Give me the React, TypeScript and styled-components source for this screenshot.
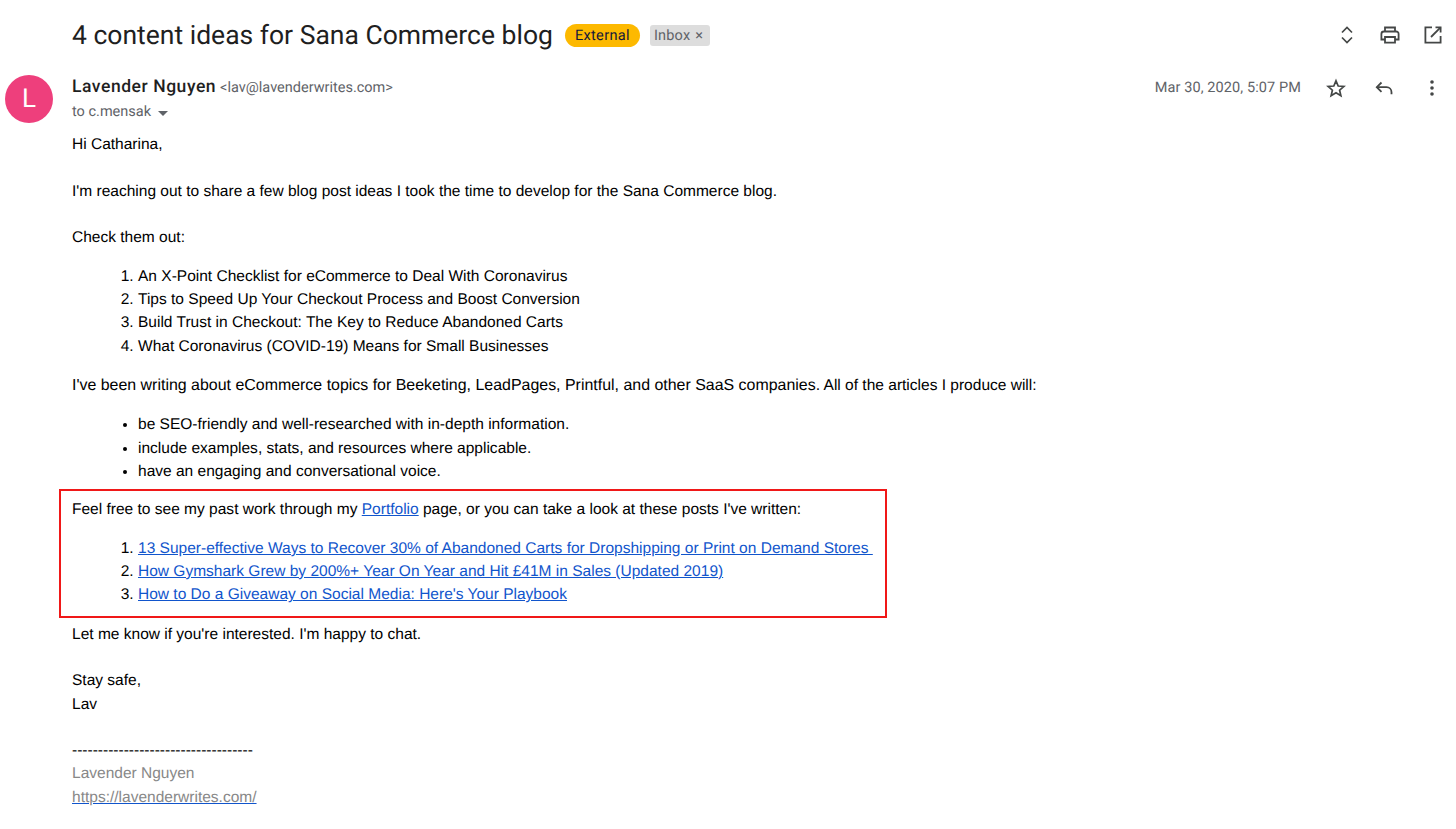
import React from 'react'
import styled, { createGlobalStyle } from 'styled-components'

const GlobalStyle = createGlobalStyle`
  html, body {
    margin: 0;
    padding: 0;
    background: #fff;
    overflow: hidden;
  }
`

const Page = styled.div`
  width: 1456px;
  height: 829px;
  overflow: hidden;
  box-sizing: border-box;
  padding: 15px 0 0 5px;
  font-family: 'Liberation Sans', Arial, sans-serif;
  color: #000;
  text-rendering: geometricPrecision;
`

const SubjectRow = styled.div`
  display: flex;
  align-items: center;
  height: 40px;
  padding-left: 67px;
  padding-right: 11px;
`

const Subject = styled.h1`
  margin: 0;
  padding-top: 1px;
  font: 400 26.5px/40px Roboto, sans-serif;
  color: #1f1f1f;
`

const ExternalTag = styled.span`
  margin-left: 12px;
  height: 23px;
  width: 75px;
  display: flex;
  align-items: center;
  justify-content: center;
  border-radius: 12px;
  background: #fdb900;
  font: 400 14.5px Roboto, sans-serif;
  letter-spacing: 0.35px;
  color: #14183a;
`

const InboxTag = styled.span`
  margin-left: 10px;
  height: 21px;
  width: 60px;
  box-sizing: border-box;
  padding-left: 4px;
  display: flex;
  align-items: center;
  gap: 5px;
  border-radius: 3px;
  background: #dddddd;
  font: 400 14.5px Roboto, sans-serif;
  letter-spacing: 0.2px;
  color: #5f6368;
`

const SubjectActions = styled.div`
  margin-left: auto;
  display: flex;
  align-items: center;
  gap: 19px;
`

const IconSlot = styled.span`
  display: flex;
  width: 24px;
  height: 24px;
  align-items: center;
  justify-content: center;
  color: #444746;
`

const SenderRow = styled.div`
  display: flex;
  margin-top: 6px;
`

const Avatar = styled.div`
  width: 48px;
  height: 48px;
  flex: none;
  margin-top: 14px;
  border-radius: 50%;
  background: #ee3f7c;
  color: #fff;
  display: flex;
  align-items: center;
  justify-content: center;
  font: 400 26px Roboto, sans-serif;
`

const SenderInfo = styled.div`
  margin-left: 19px;
  padding-top: 14px;
  flex: 1;
`

const SenderLine = styled.div`
  display: flex;
  align-items: baseline;
  height: 25px;
  gap: 4px;
`

const SenderName = styled.span`
  font: 500 17.5px/24px Roboto, sans-serif;
  letter-spacing: 0.55px;
  color: #1f1f1f;
`

const SenderEmail = styled.span`
  font: 400 14.5px/24px Roboto, sans-serif;
  color: #5f6368;
`

const ToLine = styled.div`
  display: flex;
  align-items: center;
  gap: 7px;
  height: 24px;
  font: 400 14.5px/24px Roboto, sans-serif;
  color: #5f6368;
`

const Caret = styled.span`
  width: 0;
  height: 0;
  border-left: 5px solid transparent;
  border-right: 5px solid transparent;
  border-top: 5px solid #5f6368;
  margin-top: 2px;
`

const MetaBlock = styled.div`
  display: flex;
  align-items: center;
  height: 24px;
  padding: 15px 12px 0 0;
`

const DateText = styled.span`
  font: 400 14.5px/24px Roboto, sans-serif;
  letter-spacing: 0.1px;
  color: #5f6368;
  margin-right: 23px;
`

const MetaIcons = styled.div`
  display: flex;
  gap: 24px;
`

const Body = styled.div`
  margin-top: 9px;
  padding-left: 67px;
  font-size: 15.52px;
  line-height: 23.33px;
`

const Para = styled.p<{ $gap?: number }>`
  margin: 0 0 ${(p) => p.$gap ?? 23.33}px;
`

const PastedText = styled.span`
  font-size: 15.95px;
`

const OrderedList = styled.ol`
  margin: 0 0 16px;
  padding-left: 66px;
`

const BulletList = styled.ul`
  margin: 0 0 6px;
  padding-left: 66px;
`

const LinkList = styled(OrderedList)`
  margin: 0;
`

const Highlight = styled.div`
  box-sizing: border-box;
  width: 828px;
  height: 129px;
  margin: 0 0 5px -13px;
  border: 2px solid #f01818;
  padding: 7px 0 0 11px;
`

const BlueLink = styled.a`
  color: #1155cc;
  text-decoration: underline;
`

const Signature = styled.div`
  color: #888;
`

const SignatureLink = styled.a`
  color: #888;
  text-decoration: underline;
  text-decoration-color: #1155cc;
`

const ChevronsIcon = () => (
  <svg width="24" height="24" viewBox="0 0 24 24" fill="none" stroke="currentColor" strokeWidth="1.7">
    <path d="M7 9.500 12 4.500l5 5" />
    <path d="M7 14.500 12 19.500l5-5" />
  </svg>
)

const PrintIcon = () => (
  <svg width="24" height="24" viewBox="0 0 24 24" fill="none" stroke="currentColor" strokeWidth="1.800">
    <path d="M7 8.500V4.500h10v4" />
    <path d="M7 16.500H3.400v-5.500A2.500 2.500 0 0 1 5.900 8.500h12.200a2.500 2.500 0 0 1 2.500 2.500v5.500H17" />
    <path d="M7 14h10v5.600H7z" />
  </svg>
)

const OpenIcon = () => (
  <svg width="24" height="24" viewBox="0 0 24 24" fill="none" stroke="currentColor" strokeWidth="1.800">
    <path d="M11 4.400H4.400v15.200h15.200V13" />
    <path d="M14.500 4.400h5.100v5.100" />
    <path d="M19.600 4.400 10 14" />
  </svg>
)

const StarIcon = () => (
  <svg width="24" height="24" viewBox="0 0 24 24" fill="none" stroke="currentColor" strokeWidth="1.700" strokeLinejoin="miter">
    <path d="m12 4.800 2.200 5.200 5.700.5-4.300 3.700 1.300 5.500L12 16.800l-4.900 2.900 1.300-5.500-4.300-3.700 5.700-.5z" />
  </svg>
)

const ReplyIcon = () => (
  <svg width="24" height="24" viewBox="0 0 24 24" fill="none" stroke="currentColor" strokeWidth="1.800">
    <path d="M9.500 6.500 4.800 11.200l4.700 4.700" />
    <path d="M4.800 11.200h9.700a5 5 0 0 1 5 5v2" />
  </svg>
)

const MoreIcon = () => (
  <svg width="24" height="24" viewBox="0 0 24 24" fill="currentColor">
    <circle cx="12" cy="6" r="1.800" />
    <circle cx="12" cy="12" r="1.800" />
    <circle cx="12" cy="18" r="1.800" />
  </svg>
)

export default function App() {
  return (
    <Page>
      <GlobalStyle />
      <SubjectRow>
        <Subject>4 content ideas for Sana Commerce blog</Subject>
        <ExternalTag>External</ExternalTag>
        <InboxTag>
          Inbox <span>×</span>
        </InboxTag>
        <SubjectActions>
          <IconSlot><ChevronsIcon /></IconSlot>
          <IconSlot><PrintIcon /></IconSlot>
          <IconSlot><OpenIcon /></IconSlot>
        </SubjectActions>
      </SubjectRow>

      <SenderRow>
        <Avatar>L</Avatar>
        <SenderInfo>
          <SenderLine>
            <SenderName>Lavender Nguyen</SenderName>
            <SenderEmail>&lt;lav@lavenderwrites.com&gt;</SenderEmail>
          </SenderLine>
          <ToLine>
            to c.mensak <Caret />
          </ToLine>
        </SenderInfo>
        <MetaBlock>
          <DateText>Mar 30, 2020, 5:07 PM</DateText>
          <MetaIcons>
            <IconSlot><StarIcon /></IconSlot>
            <IconSlot><ReplyIcon /></IconSlot>
            <IconSlot><MoreIcon /></IconSlot>
          </MetaIcons>
        </MetaBlock>
      </SenderRow>

      <Body>
        <Para>Hi Catharina,</Para>
        <Para>I'm reaching out to share a few blog post ideas I took the time to develop for the Sana Commerce blog.</Para>
        <Para $gap={15}>Check them out:</Para>
        <OrderedList>
          <li>An X-Point Checklist for eCommerce to Deal With Coronavirus</li>
          <li>Tips to Speed Up Your Checkout Process and Boost Conversion</li>
          <li>Build Trust in Checkout: The Key to Reduce Abandoned Carts</li>
          <li>What Coronavirus (COVID-19) Means for Small Businesses</li>
        </OrderedList>
        <Para $gap={16}>
          <PastedText>I've been writing about eCommerce topics for Beeketing, LeadPages, Printful, and other SaaS companies.</PastedText> All of the articles I produce will:
        </Para>
        <BulletList>
          <li>be SEO-friendly and well-researched with in-depth information.</li>
          <li>include examples, stats, and resources where applicable.</li>
          <li>have an engaging and conversational voice.</li>
        </BulletList>
        <Highlight>
          <Para $gap={15}>
            Feel free to see my past work through my <BlueLink href="#">Portfolio</BlueLink> page, or you can take a look at these posts I've written:
          </Para>
          <LinkList>
            <li><BlueLink href="#">13 Super-effective Ways to Recover 30% of Abandoned Carts for Dropshipping or Print on Demand Stores&nbsp;</BlueLink></li>
            <li><BlueLink href="#">How Gymshark Grew by 200%+ Year On Year and Hit £41M in Sales (Updated 2019)</BlueLink></li>
            <li><BlueLink href="#">How to Do a Giveaway on Social Media: Here's Your Playbook</BlueLink></li>
          </LinkList>
        </Highlight>
        <Para $gap={22.6}>Let me know if you're interested. I'm happy to chat.</Para>
        <Para $gap={23}>
          Stay safe,
          <br />
          Lav
        </Para>
        <div>-----------------------------------</div>
        <Signature>
          Lavender Nguyen
          <br />
          <SignatureLink href="#">https://lavenderwrites.com/</SignatureLink>
        </Signature>
      </Body>
    </Page>
  )
}
